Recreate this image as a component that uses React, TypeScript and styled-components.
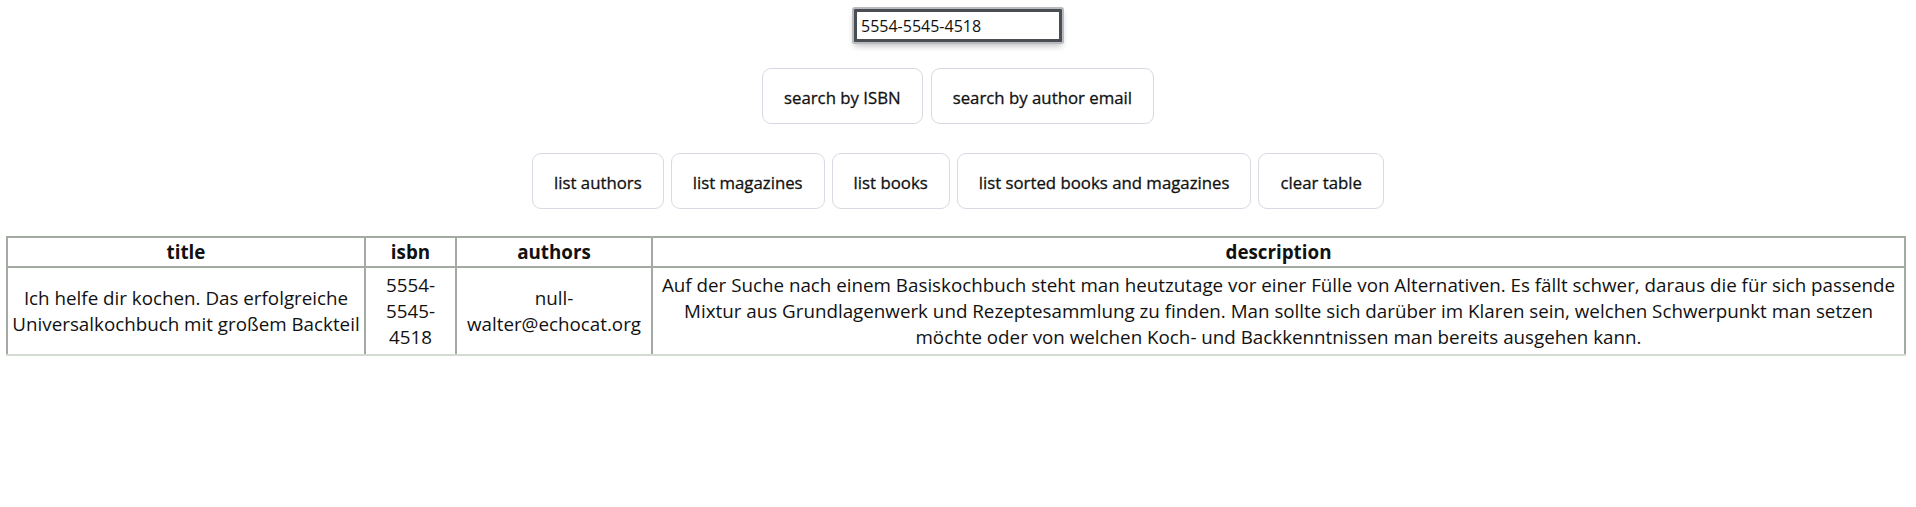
import React from "react";
import styled, { createGlobalStyle } from "styled-components";

const Global = createGlobalStyle`
  html, body { margin: 0; padding: 0; background: #ffffff; }
  body { font-family: "Open Sans", "Noto Sans", sans-serif; color: #111; }
`;

const Page = styled.div`
  display: flex;
  flex-direction: column;
  align-items: center;
  padding-top: 9px;
`;

const SearchInput = styled.input`
  box-sizing: border-box;
  width: 208px;
  height: 33px;
  padding: 0 4px;
  font-family: inherit;
  font-size: 16px;
  color: #111;
  background: #fff;
  border: 3px solid #4a4d52;
  border-radius: 1px;
  box-shadow: 0 0 0 2px #b7bbc0, 0 4px 6px rgba(0, 0, 0, 0.25);
  outline: none;
`;

const ButtonRow = styled.div<{ $gap: number; $top: number }>`
  display: flex;
  justify-content: center;
  gap: ${(p) => p.$gap}px;
  margin-top: ${(p) => p.$top}px;
`;

const Button = styled.button`
  box-sizing: border-box;
  height: 56px;
  padding: 2px 21px 0;
  font-family: inherit;
  font-size: 16.8px;
  font-weight: 400;
  -webkit-text-stroke: 0.3px #111;
  color: #111;
  background: #fff;
  border: 1px solid #d9d9e3;
  border-radius: 9px;
  cursor: pointer;
`;

const Table = styled.table`
  align-self: stretch;
  margin: 27px 10px 0 6px;
  border-collapse: collapse;
  table-layout: fixed;
  border-style: solid;
  border-width: 2px;
  border-color: #a2aaa2 #d3dbd3 #d3dbd3 #a2aaa2;
  font-size: 18.8px;
`;

const Th = styled.th`
  border: 2px solid #a2aaa2;
  padding: 2px 4px;
  line-height: 24px;
  font-weight: 700;
  text-align: center;
`;

const Td = styled.td`
  border: 2px solid #a2aaa2;
  border-bottom-color: #d3dbd3;
  padding: 4px 3px;
  line-height: 26px;
  text-align: center;
  vertical-align: middle;
`;

const Col = styled.col<{ $w?: number }>`
  width: ${(p) => (p.$w ? `${p.$w}px` : "auto")};
`;

export default function App() {
  return (
    <>
      <Global />
      <Page>
        <SearchInput defaultValue="5554-5545-4518" />
        <ButtonRow $gap={8} $top={26}>
          <Button>search by ISBN</Button>
          <Button>search by author email</Button>
        </ButtonRow>
        <ButtonRow $gap={7} $top={29}>
          <Button>list authors</Button>
          <Button>list magazines</Button>
          <Button>list books</Button>
          <Button>list sorted books and magazines</Button>
          <Button>clear table</Button>
        </ButtonRow>
        <Table>
          <colgroup>
            <Col $w={358} />
            <Col $w={91} />
            <Col $w={196} />
            <Col />
          </colgroup>
          <thead>
            <tr>
              <Th>title</Th>
              <Th>isbn</Th>
              <Th>authors</Th>
              <Th>description</Th>
            </tr>
          </thead>
          <tbody>
            <tr>
              <Td>Ich helfe dir kochen. Das erfolgreiche Universalkochbuch mit großem Backteil</Td>
              <Td>5554-5545-4518</Td>
              <Td>null-walter@echocat.org</Td>
              <Td>
                Auf der Suche nach einem Basiskochbuch steht man heutzutage vor einer Fülle von Alternativen. Es fällt schwer, daraus die für sich passende
                <br />
                Mixtur aus Grundlagenwerk und Rezeptesammlung zu finden. Man sollte sich darüber im Klaren sein, welchen Schwerpunkt man setzen
                <br />
                möchte oder von welchen Koch- und Backkenntnissen man bereits ausgehen kann.
              </Td>
            </tr>
          </tbody>
        </Table>
      </Page>
    </>
  );
}
